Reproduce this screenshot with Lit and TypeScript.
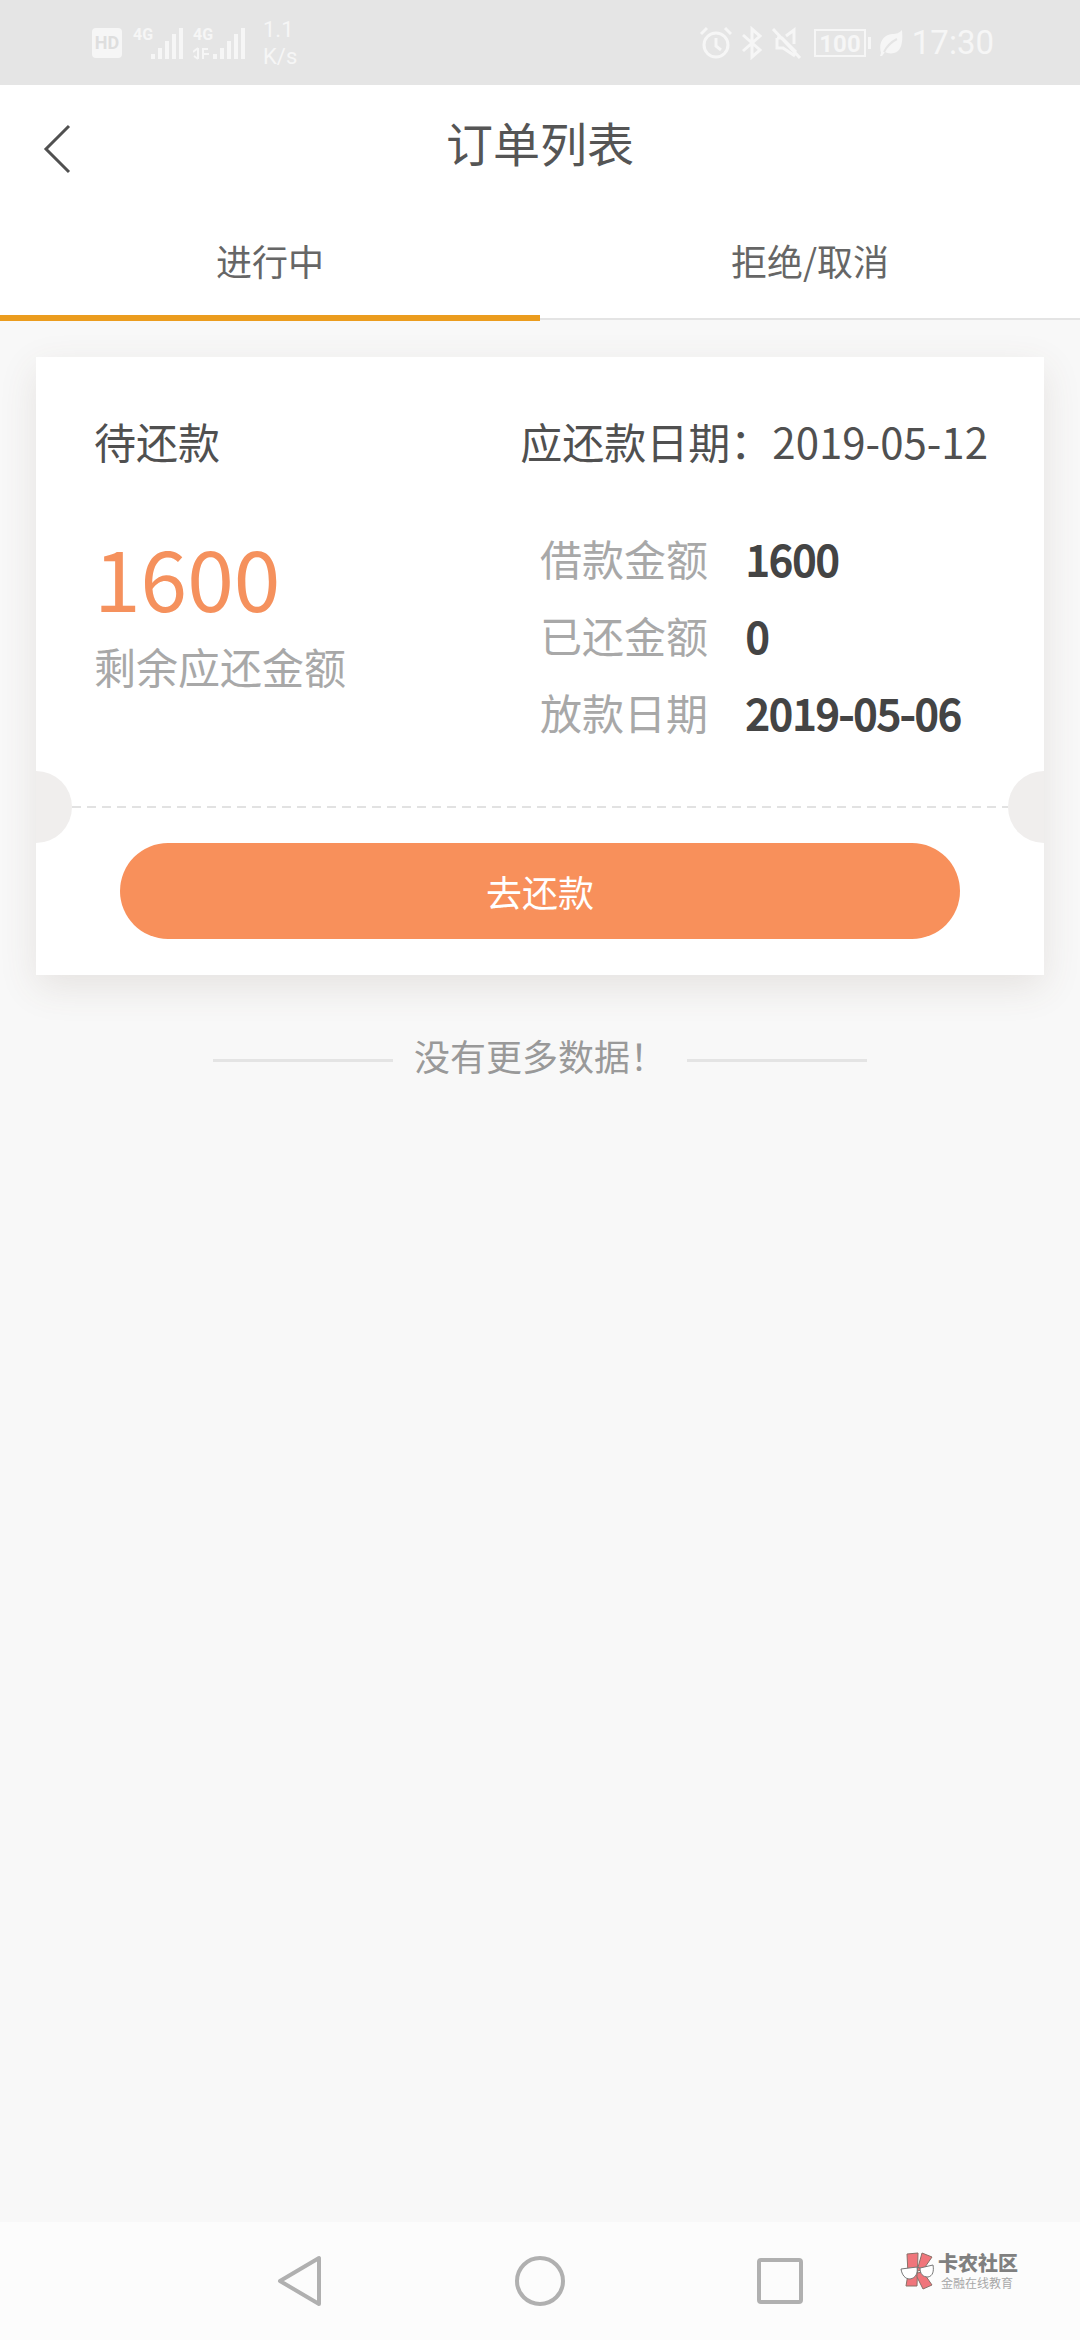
import { LitElement, html, css, svg } from "lit";
import { customElement, property, state } from "lit/decorators.js";

interface Order {
  status: string;
  dueDate: string;
  remaining: number;
  principal: number;
  repaid: number;
  loanDate: string;
}

const ORDERS: Order[] = [
  {
    status: "待还款",
    dueDate: "2019-05-12",
    remaining: 1600,
    principal: 1600,
    repaid: 0,
    loanDate: "2019-05-06",
  },
];

const signalBars = svg`
  <rect x="18" y="28" width="4" height="5"></rect>
  <rect x="25" y="22" width="4" height="11"></rect>
  <rect x="32" y="15" width="4" height="18"></rect>
  <rect x="39" y="8" width="4" height="25"></rect>
  <rect x="46" y="2" width="4" height="31"></rect>`;

@customElement("status-bar")
export class StatusBar extends LitElement {
  static styles = css`
    :host {
      display: flex;
      align-items: center;
      justify-content: space-between;
      height: 85px;
      padding: 0 86px 0 91px;
      box-sizing: border-box;
      background: #e5e5e5;
      color: #f6f6f6;
      font-family: Roboto, sans-serif;
    }
    .group {
      display: flex;
      align-items: center;
      gap: 10px;
    }
    .system {
      gap: 7px;
    }
    svg {
      display: block;
      fill: currentColor;
    }
    .line {
      fill: none;
      stroke: currentColor;
      stroke-width: 3;
    }
    .thin {
      fill: none;
      stroke: currentColor;
      stroke-width: 2;
    }
    .cut {
      fill: none;
      stroke: #e5e5e5;
      stroke-width: 2;
    }
    .hd {
      fill: #dedede;
      font-size: 18px;
      font-weight: 700;
    }
    .net {
      font-size: 16px;
      font-weight: 700;
    }
    .charge {
      font-size: 24px;
      font-weight: 700;
    }
    .speed {
      margin-left: 8px;
      font-size: 22px;
      line-height: 27px;
    }
    .speed span {
      display: block;
    }
    .time {
      font-size: 33px;
      line-height: 40px;
    }
  `;

  render() {
    return html`
      <div class="group">
        <svg width="32" height="32" viewBox="0 0 32 32">
          <rect x="1" y="1" width="30" height="30" rx="4"></rect>
          <text class="hd" x="16" y="22" text-anchor="middle">HD</text>
        </svg>
        <svg width="50" height="34" viewBox="0 0 50 34">
          ${signalBars}
          <text class="net" x="0" y="14">4G</text>
        </svg>
        <svg width="52" height="34" viewBox="-2 0 52 34">
          ${signalBars}
          <text class="net" x="-2" y="14">4G</text>
          <path class="thin" d="M3 22v11M-2 26l5-4M-1 30l4 3M8 33V22M8 23l5 0M8 28h6"></path>
        </svg>
        <div class="speed"><span>1.1</span><span>K/s</span></div>
      </div>
      <div class="group system">
        <svg width="34" height="34" viewBox="0 0 34 34">
          <circle class="line" cx="17" cy="19" r="12"></circle>
          <path class="line" d="M17 12v8l5 4M2 8l6-6M32 8l-6-6"></path>
        </svg>
        <svg width="24" height="34" viewBox="0 0 24 34">
          <path class="line" d="M3 9l17 15-8 7V3l8 7L3 25"></path>
        </svg>
        <svg width="34" height="34" viewBox="0 0 34 34">
          <path class="line" d="M2 3l27 29M6 12h5l14 14M6 12v10h6l12 8M15 10l8-6v14"></path>
        </svg>
        <svg width="60" height="34" viewBox="-2 0 60 34">
          <rect class="thin" x="1" y="4" width="50" height="26"></rect>
          <rect x="54" y="11" width="3" height="12"></rect>
          <text class="charge" x="26" y="26" text-anchor="middle">100</text>
        </svg>
        <svg width="26" height="34" viewBox="0 0 26 34">
          <path d="M2 27C-1 16 5 9 13 8c5 0 7-1 10-4 1 11 0 21-8 23-4 1-7 0-9-1l-3 4H1z"></path>
          <path class="cut" d="M5 26C8 20 12 16 18 13"></path>
        </svg>
        <span class="time">17:30</span>
      </div>
    `;
  }
}

@customElement("order-card")
export class OrderCard extends LitElement {
  @property({ attribute: false }) order!: Order;

  static styles = css`
    :host {
      display: block;
      padding: 60px 0 36px;
      background: #fff;
      box-shadow: 0 12px 36px rgba(100, 75, 60, 0.12);
      color: #505050;
      font-size: 42px;
      line-height: 48px;
    }
    .head {
      display: flex;
      justify-content: space-between;
      padding: 0 56px 0 58px;
    }
    .body {
      display: grid;
      grid-template-columns: 1fr 1fr;
      padding: 69px 0 35px;
    }
    .balance {
      padding-left: 58px;
    }
    .amount {
      color: #f5915d;
      font-size: 84px;
      line-height: 84px;
    }
    .caption {
      margin-top: 24px;
      color: #a8a8a8;
    }
    .facts {
      display: grid;
      grid-template-columns: max-content 1fr;
      gap: 29px 38px;
      align-content: start;
      margin: 0;
    }
    dt {
      color: #a8a8a8;
    }
    dd {
      margin: 0;
      color: #444;
      -webkit-text-stroke: 2px #444;
    }
    .tear {
      display: flex;
      align-items: center;
      height: 72px;
    }
    .notch {
      width: 36px;
      height: 72px;
      background: #f0eeed;
      border-radius: 0 36px 36px 0;
    }
    .notch.end {
      border-radius: 36px 0 0 36px;
    }
    .dashes {
      flex: 1;
      height: 2px;
      background: repeating-linear-gradient(90deg, #e2e2e2 0 9px, transparent 9px 15px);
    }
    .pay {
      display: block;
      width: calc(100% - 168px);
      height: 96px;
      margin: 0 auto;
      padding: 0;
      border: 0;
      border-radius: 48px;
      background: #f8905b;
      color: #fff;
      font: inherit;
      font-size: 36px;
    }
  `;

  render() {
    const o = this.order;
    return html`
      <div class="head">
        <span>${o.status}</span>
        <span>应还款日期：${o.dueDate}</span>
      </div>
      <div class="body">
        <div class="balance">
          <div class="amount">${o.remaining}</div>
          <div class="caption">剩余应还金额</div>
        </div>
        <dl class="facts">
          <dt>借款金额</dt>
          <dd>${o.principal}</dd>
          <dt>已还金额</dt>
          <dd>${o.repaid}</dd>
          <dt>放款日期</dt>
          <dd>${o.loanDate}</dd>
        </dl>
      </div>
      <div class="tear">
        <span class="notch"></span>
        <span class="dashes"></span>
        <span class="notch end"></span>
      </div>
      <button class="pay" type="button">去还款</button>
    `;
  }
}

@customElement("system-nav")
export class SystemNav extends LitElement {
  static styles = css`
    :host {
      display: grid;
      grid-template-columns: 3fr 4fr 4fr 4fr 3fr;
      align-items: center;
      height: 118px;
      background: #fcfcfc;
    }
    .key {
      grid-row: 1;
      justify-self: center;
      display: block;
      padding: 0;
      border: 0;
      background: none;
    }
    .back {
      grid-column: 2;
    }
    .home {
      grid-column: 3;
    }
    .recent {
      grid-column: 4;
    }
    .key svg {
      display: block;
      fill: none;
      stroke: #b0b0b0;
      stroke-width: 4;
      stroke-linejoin: round;
    }
    .brand {
      grid-column: 5;
      grid-row: 1;
      display: flex;
      align-items: center;
      gap: 2px;
      padding-bottom: 20px;
      white-space: nowrap;
    }
    .mark {
      flex: none;
    }
    .name {
      color: #808080;
      font-size: 20px;
      font-weight: 900;
      line-height: 20px;
    }
    .tag {
      margin-top: 4px;
      padding-left: 3px;
      color: #a8a8a8;
      font-size: 12px;
      line-height: 12px;
    }
  `;

  render() {
    return html`
      <button class="key back" type="button" aria-label="返回">
        <svg width="52" height="52" viewBox="0 0 52 52"><path d="M6 26 45 3v46z"></path></svg>
      </button>
      <button class="key home" type="button" aria-label="主页">
        <svg width="52" height="52" viewBox="0 0 52 52"><circle cx="26" cy="26" r="23"></circle></svg>
      </button>
      <button class="key recent" type="button" aria-label="最近任务">
        <svg width="52" height="52" viewBox="0 0 52 52"><rect x="5" y="5" width="42" height="42" rx="2"></rect></svg>
      </button>
      <div class="brand">
        <svg class="mark" width="36" height="38" viewBox="0 0 36 38">
          <g fill="#f0757b" stroke="#8a7068" stroke-width="1">
            <path d="M7 2l11-1-1 33H6L8 22z"></path>
            <path d="M22 1l10 4-9 13-6 1z"></path>
            <path d="M17 21l6-1 9 13-9 4-6-12z"></path>
          </g>
          <g fill="#fff" stroke="#777" stroke-width="1">
            <path d="M1 17l16-2c1 6-1 11-7 12C5 27 2 23 1 17z"></path>
            <path d="M20 16l13-3c1 6 0 11-5 12-5 0-8-3-8-9z"></path>
            <path d="M17 15l3 1" fill="none"></path>
          </g>
        </svg>
        <div>
          <div class="name">卡农社区</div>
          <div class="tag">金融在线教育</div>
        </div>
      </div>
    `;
  }
}

@customElement("app-root")
export class AppRoot extends LitElement {
  @state() private active = 0;

  private tabs = ["进行中", "拒绝/取消"];

  static styles = css`
    :host {
      display: flex;
      flex-direction: column;
      min-height: 100vh;
      background: #f8f8f8;
      color: #555;
      font-family: "Noto Sans CJK SC", sans-serif;
    }
    .bar {
      display: grid;
      grid-template-columns: 1fr auto 1fr;
      align-items: center;
      height: 114px;
      padding: 0 40px;
      background: #fff;
    }
    .back {
      justify-self: start;
      padding: 14px 0 0;
      border: 0;
      background: none;
    }
    .back svg {
      display: block;
      fill: none;
      stroke: #505050;
      stroke-width: 3;
    }
    .title {
      margin: 0;
      font-size: 47px;
      font-weight: 400;
      line-height: 48px;
    }
    .tabs {
      display: flex;
      height: 121px;
      box-sizing: border-box;
      border-bottom: 2px solid #e4e4e4;
      background: #fff;
    }
    .tab {
      position: relative;
      flex: 1;
      padding: 3px 0 0;
      border: 0;
      background: none;
      color: #666;
      font: inherit;
      font-size: 36px;
      line-height: 48px;
    }
    .tab[aria-selected="true"]::after {
      content: "";
      position: absolute;
      inset: auto 0 -3px;
      height: 6px;
      background: #eb9c1e;
    }
    .list {
      flex: 1;
      padding: 37px 36px 0;
    }
    .end {
      display: flex;
      justify-content: center;
      align-items: flex-end;
      gap: 21px;
      margin: 56px 0 0;
      color: #999;
      font-size: 36px;
      line-height: 48px;
    }
    .end::before,
    .end::after {
      content: "";
      width: 180px;
      height: 3px;
      margin-bottom: 17px;
      background: #e4e4e4;
    }
  `;

  render() {
    return html`
      <status-bar></status-bar>
      <header class="bar">
        <button class="back" type="button" aria-label="返回">
          <svg width="34" height="50" viewBox="0 0 34 50"><path d="M29 2 6 25l23 23"></path></svg>
        </button>
        <h1 class="title">订单列表</h1>
      </header>
      <div class="tabs" role="tablist">
        ${this.tabs.map(
          (label, i) => html`<button
            class="tab"
            type="button"
            role="tab"
            aria-selected=${i === this.active ? "true" : "false"}
            @click=${() => (this.active = i)}
          >${label}</button>`
        )}
      </div>
      <main class="list">
        ${ORDERS.map((order) => html`<order-card .order=${order}></order-card>`)}
        <p class="end">没有更多数据！</p>
      </main>
      <system-nav></system-nav>
    `;
  }
}
